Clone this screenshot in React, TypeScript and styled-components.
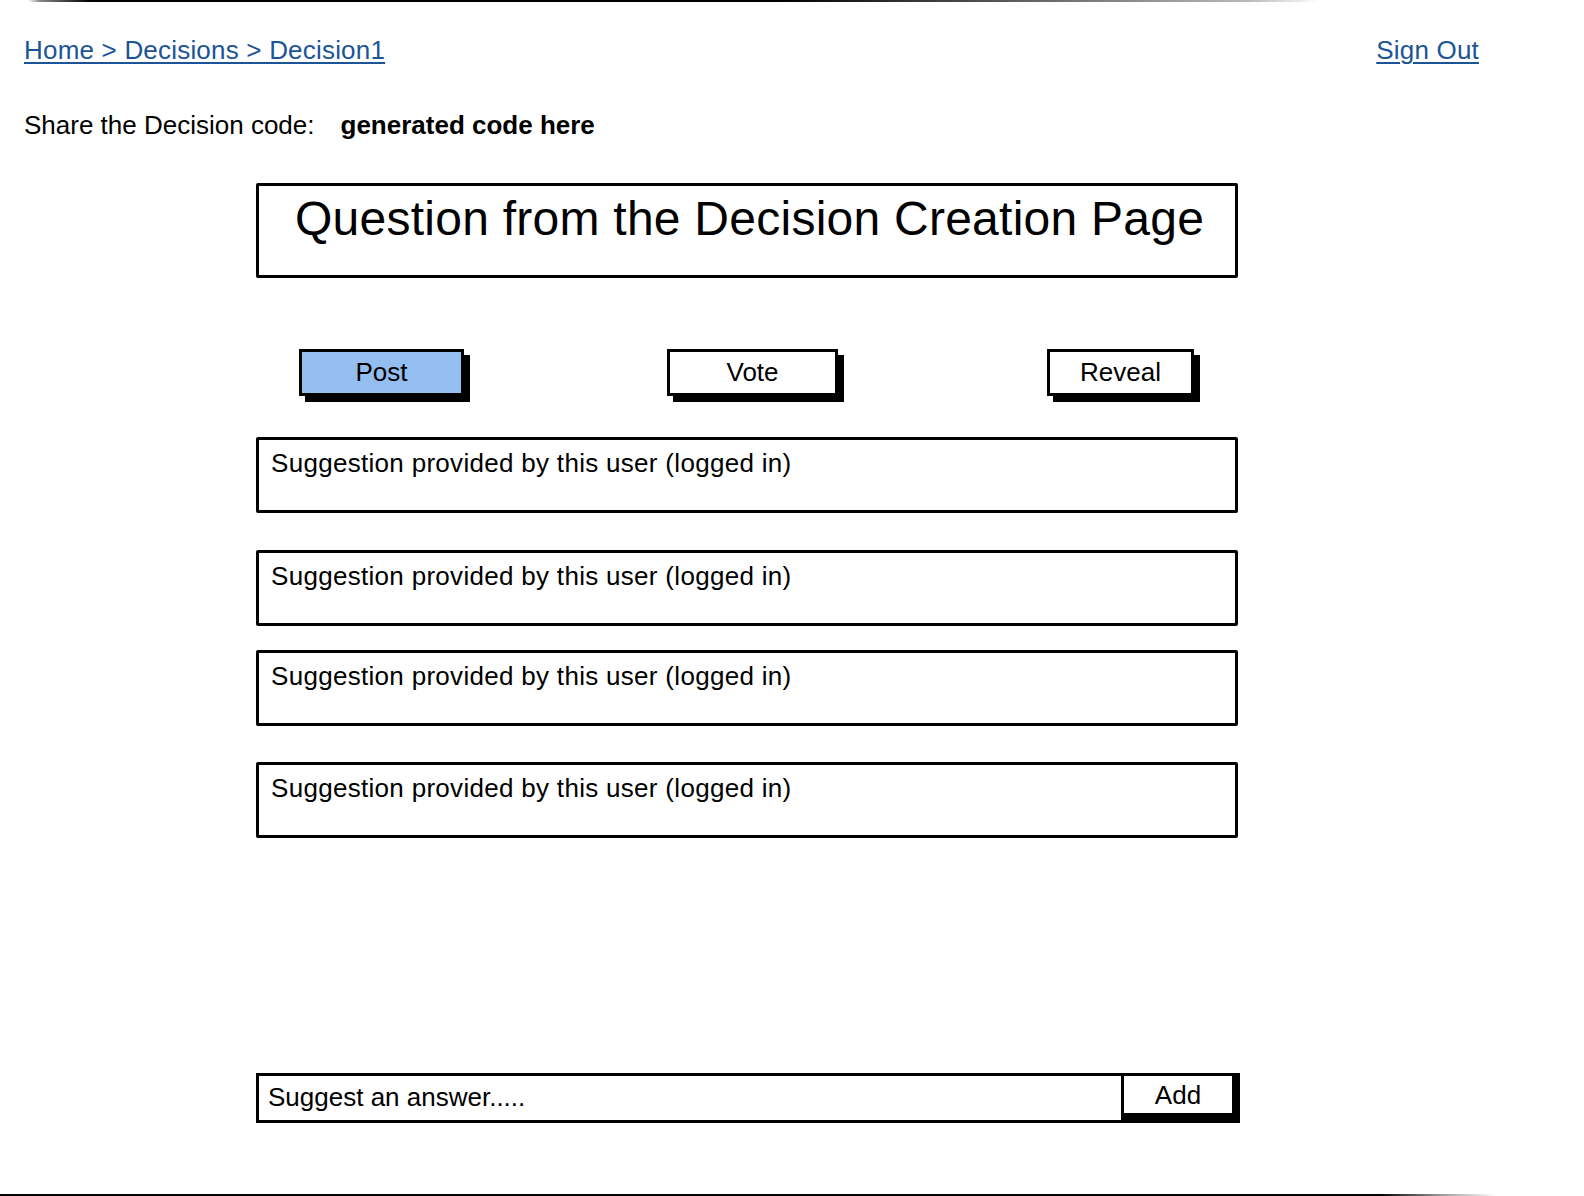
import React from 'react';
import styled, { createGlobalStyle } from 'styled-components';

const GlobalStyle = createGlobalStyle`
  html, body {
    margin: 0;
    padding: 0;
    background: #ffffff;
  }

  body {
    font-family: "Liberation Sans", Arial, sans-serif;
    color: #000;
  }
`;

const Page = styled.div`
  width: 1584px;
  height: 1196px;
  display: flex;
  flex-direction: column;
  overflow: hidden;
`;

const Rule = styled.div<{ fade: string }>`
  height: 2px;
  flex-shrink: 0;
  background: ${(p) => p.fade};
`;

const Header = styled.div`
  display: flex;
  justify-content: space-between;
  align-items: center;
  margin-top: 33px;
  padding: 0 105px 0 24px;
  line-height: 30px;
  font-size: 26px;
  letter-spacing: 0.2px;
`;

const Crumb = styled.a`
  color: #1b5597;
  text-decoration: underline;
  text-underline-offset: 3px;
  text-decoration-thickness: 2px;
  cursor: pointer;
`;

const ShareLine = styled.div`
  margin-top: 45px;
  padding-left: 24px;
  font-size: 26px;
  line-height: 30px;

  strong {
    margin-left: 26px;
    font-weight: bold;
  }
`;

const Column = styled.div`
  width: 982px;
  margin-left: 256px;
  display: flex;
  flex-direction: column;
`;

const QuestionBox = styled.div`
  margin-top: 43px;
  height: 95px;
  box-sizing: border-box;
  border: 3px solid #000;
  border-radius: 2px;
  padding: 5px 0 0 36px;
  font-size: 48px;
  line-height: 56px;
  letter-spacing: 0.25px;
`;

const ButtonRow = styled.div`
  margin-top: 71px;
  display: flex;
  padding-left: 43px;
`;

const TabButton = styled.button<{ active?: boolean; w: number; before: number }>`
  width: ${(p) => p.w}px;
  height: 47px;
  margin-left: ${(p) => p.before}px;
  box-sizing: border-box;
  border: 3px solid #000;
  background: ${(p) => (p.active ? '#94bdf0' : '#fff')};
  box-shadow: 6px 6px 0 #000;
  font-family: inherit;
  font-size: 26px;
  color: #000;
  padding: 0;
  cursor: pointer;
`;

const Suggestion = styled.div<{ gap: number }>`
  margin-top: ${(p) => p.gap}px;
  height: 76px;
  box-sizing: border-box;
  border: 3px solid #000;
  border-radius: 2px;
  padding: 8px 0 0 12px;
  font-size: 26px;
  line-height: 30px;
  letter-spacing: 0.3px;
`;

const InputRow = styled.div`
  margin: 235px -2px 0 0;
  display: flex;
  align-items: flex-start;
  height: 50px;
  box-sizing: border-box;
  border: 3px solid #000;
  border-right-width: 8px;
`;

const Field = styled.div`
  flex: 1;
  padding-left: 9px;
  font-size: 26px;
  line-height: 42px;
`;

const AddButton = styled.button`
  width: 111px;
  height: 47px;
  margin-top: -3px;
  box-sizing: border-box;
  border: 3px solid #000;
  border-right: none;
  border-bottom-width: 7px;
  background: #fff;
  font-family: inherit;
  font-size: 26px;
  line-height: 34px;
  color: #000;
  padding: 0;
  cursor: pointer;
`;

const Spacer = styled.div`
  flex: 1;
`;

const tabs = [
  { label: 'Post', w: 165, before: 0, active: true },
  { label: 'Vote', w: 171, before: 203, active: false },
  { label: 'Reveal', w: 147, before: 209, active: false },
];

const suggestions = [
  { id: 1, gap: 41 },
  { id: 2, gap: 37 },
  { id: 3, gap: 24 },
  { id: 4, gap: 36 },
];

export default function App() {
  return (
    <>
      <GlobalStyle />
      <Page>
        <Rule fade="linear-gradient(to right, transparent 28px, #888 40px, #000 90px, #000 780px, #bbb 1250px, transparent 1320px)" />
        <Header>
          <Crumb>Home &gt; Decisions &gt; Decision1</Crumb>
          <Crumb>Sign Out</Crumb>
        </Header>
        <ShareLine>
          Share the Decision code:
          <strong>generated code here</strong>
        </ShareLine>
        <Column>
          <QuestionBox>Question from the Decision Creation Page</QuestionBox>
          <ButtonRow>
            {tabs.map((t) => (
              <TabButton key={t.label} active={t.active} w={t.w} before={t.before}>
                {t.label}
              </TabButton>
            ))}
          </ButtonRow>
          {suggestions.map((s) => (
            <Suggestion key={s.id} gap={s.gap}>
              Suggestion provided by this user (logged in)
            </Suggestion>
          ))}
          <InputRow>
            <Field>Suggest an answer.....</Field>
            <AddButton>Add</AddButton>
          </InputRow>
        </Column>
        <Spacer />
        <Rule fade="linear-gradient(to right, #000 0px, #000 1380px, #999 1440px, transparent 1495px)" />
      </Page>
    </>
  );
}
